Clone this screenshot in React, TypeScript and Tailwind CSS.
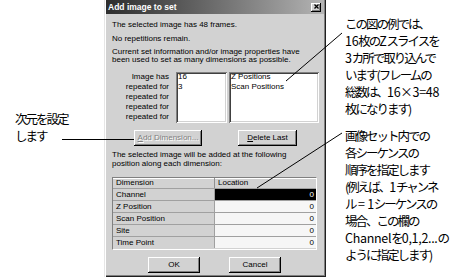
import React from 'react';

const ui = "font-['Liberation_Sans',Arial,sans-serif]";
const jp = "font-['Noto_Sans_CJK_JP','Noto_Sans_CJK_SC',sans-serif]";

// win2k style bevels
const raised = "shadow-[inset_-1px_-1px_0_#000,inset_1px_1px_0_#fff,inset_-2px_-2px_0_#808080]";
const sunken = "shadow-[inset_1px_1px_0_#808080,inset_-1px_-1px_0_#fff,inset_2px_2px_0_#404040,inset_-2px_-2px_0_#d2d2d2]";

const dims = ['Channel', 'Z Position', 'Scan Position', 'Site', 'Time Point'];

// latin runs inside the japanese notes keep normal spacing
const L = ({ children }: { children: React.ReactNode }) => <span className="tracking-[-0.3px]">{children}</span>;

function Button({ children, className = '' }: { children: React.ReactNode; className?: string }) {
  return (
    <div className={`h-[16px] shrink-0 flex items-center justify-center bg-[#d2d2d2] ${raised} leading-none ${className}`}>
      {children}
    </div>
  );
}

function Dialog() {
  return (
    <div className="w-[222px] h-[277px] shrink-0 flex flex-col bg-[#d2d2d2] text-[8px] text-black shadow-[inset_1px_0_0_#e6e6e6,inset_2px_0_0_#fff,inset_-1px_-1px_0_#202020,inset_-2px_-2px_0_#808080]">
      {/* title bar */}
      <div className="mx-[2px] h-[14px] shrink-0 flex items-center justify-between pl-[2px] pr-[3px] bg-linear-to-r from-[#2e2e2e] to-[#b4b4b4]">
        <span className="text-white font-bold text-[8.5px] leading-none">Add image to set</span>
        <div className={`w-[10px] h-[9px] flex items-center justify-center bg-[#d2d2d2] ${raised}`}>
          <svg width="5" height="5" viewBox="0 0 5 5" className="-mt-px">
            <path d="M0.5 0.5 L4.5 4.5 M4.5 0.5 L0.5 4.5" stroke="#000" strokeWidth="1.3" />
          </svg>
        </div>
      </div>

      <div className="pl-[8px] pr-[5px] flex flex-col">
        <div className="mt-[6px] leading-[10px] whitespace-nowrap">The selected image has 48 frames.</div>
        <div className="mt-[4px] leading-[10px] whitespace-nowrap">No repetitions remain.</div>
        <div className="mt-[4px] leading-[8px] whitespace-nowrap">
          Current set information and/or image properties have<br />
          been used to set as many dimensions as possible.
        </div>

        {/* repeat lists */}
        <div className="mt-[8px] h-[51px] flex">
          <div className="w-[57px] text-right leading-[10px] whitespace-nowrap">
            Image has<br />repeated for<br />repeated for<br />repeated for<br />repeated for
          </div>
          <div className={`ml-[7px] w-[51px] bg-white pl-[2px] leading-[10px] ${sunken}`}>16<br />3</div>
          <div className={`ml-[2px] w-[90px] bg-white pl-[2px] leading-[10px] whitespace-nowrap ${sunken}`}>
            Z Positions<br />Scan Positions
          </div>
        </div>

        <div className="mt-[7px] flex">
          <Button className="ml-[22px] w-[68px] text-[#808080] [text-shadow:1px_1px_0_#fff]">
            <span><span className="underline">A</span>dd Dimension...</span>
          </Button>
          <Button className="ml-[36px] w-[59px]">
            <span><span className="underline">D</span>elete Last</span>
          </Button>
        </div>

        <div className="mt-[5px] leading-[8.5px] whitespace-nowrap">
          The selected image will be added at the following<br />
          position along each dimension:
        </div>

        {/* dimension grid */}
        <div className="mt-[9px] w-[205px] h-[73px] flex flex-col border border-[#808080] border-r-white border-b-white bg-[#d2d2d2]">
          <div className="h-[10px] flex shrink-0 shadow-[inset_0_1px_0_#fff]">
            <div className="w-[102px] pl-[3px] leading-[10px] border-r border-[#909090]">Dimension</div>
            <div className="flex-1 pl-[3px] leading-[10px]">Location</div>
          </div>
          {dims.map((d, i) => (
            <div key={d} className="h-[12px] flex shrink-0 border-t border-[#a0a0a0]">
              <div className="w-[102px] pl-[3px] leading-[11px] border-r border-[#a0a0a0]">{d}</div>
              <div className={`flex-1 pr-[2px] text-right leading-[11px] ${i === 0 ? 'bg-black text-white' : 'bg-[#f6f6f6]'}`}>0</div>
            </div>
          ))}
        </div>

        <div className="mt-[7px] flex">
          <Button className="ml-[36px] w-[52px]">OK</Button>
          <Button className="ml-[29px] w-[52px]">Cancel</Button>
        </div>
      </div>
    </div>
  );
}

export default function App() {
  return (
    <div className={`relative w-[463px] h-[278px] bg-white overflow-hidden flex ${ui}`}>
      <div className={`w-[104px] shrink-0 pl-[15px] pt-[110px] text-[12.5px] leading-[17px] tracking-[-2px] ${jp}`}>
        <div className="whitespace-nowrap">次元を設定</div>
        <div className="whitespace-nowrap">します</div>
      </div>

      <Dialog />

      <div className={`flex-1 pl-[19px] pt-[15px] text-[12.5px] leading-[17px] tracking-[-2px] ${jp}`}>
        <div className="whitespace-nowrap">この図の例では、</div>
        <div className="whitespace-nowrap"><L>16</L>枚の<L>Z</L>スライスを</div>
        <div className="whitespace-nowrap"><L>3</L>カ所で取り込んで</div>
        <div className="whitespace-nowrap">います(フレームの</div>
        <div className="whitespace-nowrap">総数は、<L>16×3=48</L></div>
        <div className="whitespace-nowrap">枚になります)</div>
        <div className="mt-[10px] whitespace-nowrap">画像セット内での</div>
        <div className="whitespace-nowrap">各シーケンスの</div>
        <div className="whitespace-nowrap">順序を指定します</div>
        <div className="whitespace-nowrap">(例えば、<L>1</L>チャンネ</div>
        <div className="whitespace-nowrap">ル<L> = 1</L>シーケンスの</div>
        <div className="whitespace-nowrap">場合、この欄の</div>
        <div className="whitespace-nowrap"><L>Channel</L>を<L>0,1,2...</L>の</div>
        <div className="whitespace-nowrap">ように指定します)</div>
      </div>

      {/* leader lines */}
      <svg className="absolute inset-0 pointer-events-none" width="463" height="278">
        <line x1="286" y1="81" x2="342" y2="33" stroke="#000" strokeWidth="1" />
        <line x1="342" y1="133" x2="257" y2="188" stroke="#000" strokeWidth="1" />
        <line x1="62" y1="139.5" x2="134" y2="139.5" stroke="#000" strokeWidth="1" />
      </svg>
    </div>
  );
}
